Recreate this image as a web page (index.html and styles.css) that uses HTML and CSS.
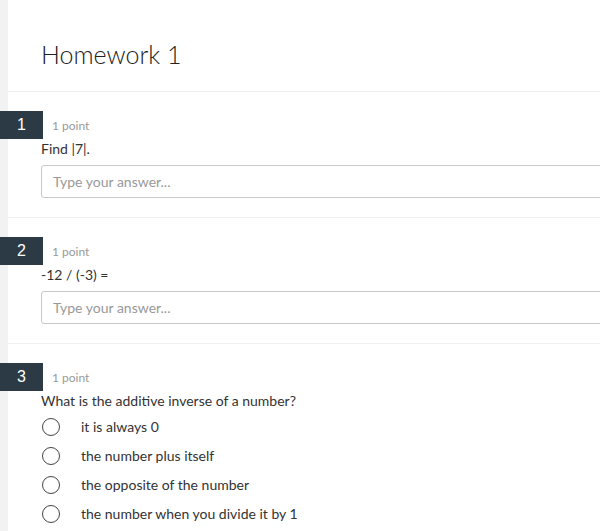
FILE: index.html
```html
<!DOCTYPE html>
<html>
<head>
<meta charset="utf-8">
<link rel="stylesheet" href="styles.css">
</head>
<body>
<div class="page">
  <header class="head">
    <h1 class="title">Homework 1</h1>
  </header>
  <section class="q">
    <div class="meta"><span class="num">1</span><span class="pts">1 point</span></div>
    <div class="body">
      <p class="text">Find |7|.</p>
      <input class="answer" type="text" placeholder="Type your answer...">
    </div>
  </section>
  <section class="q">
    <div class="meta"><span class="num">2</span><span class="pts">1 point</span></div>
    <div class="body">
      <p class="text">-12 / (-3) =</p>
      <input class="answer" type="text" placeholder="Type your answer...">
    </div>
  </section>
  <section class="q last">
    <div class="meta"><span class="num">3</span><span class="pts">1 point</span></div>
    <div class="body">
      <p class="text">What is the additive inverse of a number?</p>
      <ul class="opts">
        <li class="opt"><span class="radio"></span><span>it is always 0</span></li>
        <li class="opt"><span class="radio"></span><span>the number plus itself</span></li>
        <li class="opt"><span class="radio"></span><span>the opposite of the number</span></li>
        <li class="opt"><span class="radio"></span><span>the number when you divide it by 1</span></li>
      </ul>
    </div>
  </section>
</div>
</body>
</html>
```
FILE: styles.css
```css
html, body { margin: 0; padding: 0; }
body {
  background: #f2f2f2;
  font-family: Lato, "Open Sans", sans-serif;
  color: #333;
  overflow: hidden;
  height: 531px;
}
.page {
  margin-left: 8px;
  background: #fff;
  height: 531px;
}
.head {
  height: 92px;
  border-bottom: 1px solid #f0f0f0;
  box-sizing: border-box;
  padding: 36px 0 0 33px;
}
.title {
  margin: 0;
  font-size: 25px;
  font-weight: 300;
  line-height: 36px;
  color: #222;
}
.q {
  border-bottom: 1px solid #f0f0f0;
  padding: 19px 0 19px 0;
  height: 126px;
  box-sizing: border-box;
}
.q.last {
  height: auto;
  border-bottom: none;
}
.meta {
  display: flex;
  align-items: center;
  height: 28px;
  margin-left: -8px;
}
.num {
  width: 43px;
  height: 28px;
  flex: none;
  background: #2b3a45;
  color: #fff;
  font-family: "Liberation Sans", Arial, sans-serif;
  font-size: 16px;
  display: flex;
  align-items: center;
  justify-content: center;
}
.pts {
  margin-left: 9px;
  font-size: 12px;
  color: #999;
}
.body {
  padding-left: 33px;
  overflow: hidden;
}
.text {
  margin: 0;
  font-size: 14px;
  line-height: 20px;
  color: #333;
}
.answer {
  display: block;
  margin-top: 6px;
  width: 600px;
  height: 33px;
  box-sizing: border-box;
  border: 1px solid #c8c8c8;
  border-radius: 3px;
  padding: 0 11px;
  font-family: Lato, sans-serif;
  font-size: 14px;
  outline: none;
}
.answer::placeholder { color: #999; }
.opts {
  list-style: none;
  margin: 1px 0 0;
  padding: 0;
}
.opt {
  display: flex;
  align-items: center;
  height: 29px;
  font-size: 14px;
  color: #333;
}
.radio {
  width: 18px;
  height: 18px;
  box-sizing: border-box;
  border: 1.5px solid #444;
  border-radius: 50%;
  margin-left: 1px;
  margin-right: 21px;
  flex: none;
}
```
